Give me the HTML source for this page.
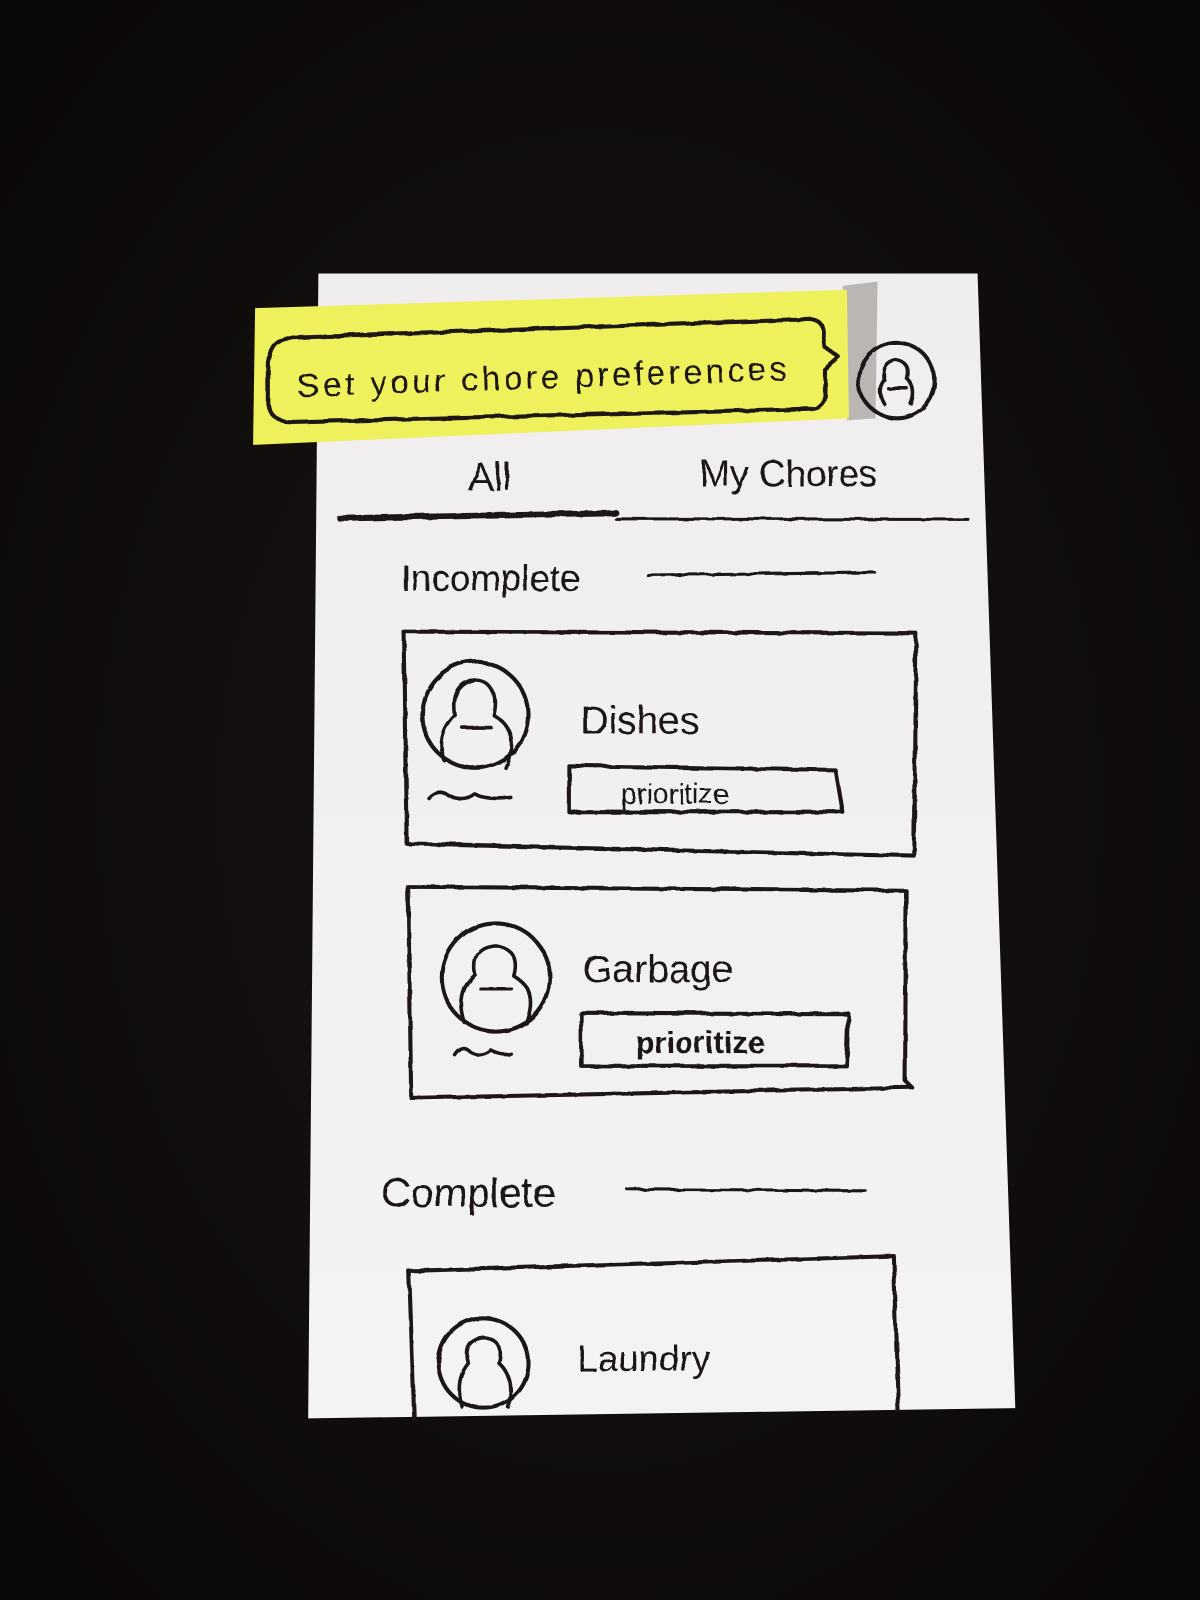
<!DOCTYPE html>
<html><head><meta charset="utf-8"><style>
html,body{margin:0;padding:0;width:1200px;height:1600px;overflow:hidden;background:#110d0d}
svg{display:block}
text{font-family:"Liberation Sans",sans-serif;fill:#1a1616}
</style></head><body>
<svg width="1200" height="1600" viewBox="0 0 1176 1568" preserveAspectRatio="none">
<defs>
<radialGradient id="bg" cx="0.5" cy="0.5" r="0.7"><stop offset="0" stop-color="#1a1515"/><stop offset="1" stop-color="#0a0707"/></radialGradient>
<linearGradient id="paper" x1="0" y1="0" x2="0" y2="1"><stop offset="0" stop-color="#efeded"/><stop offset="1" stop-color="#f4f3f3"/></linearGradient>
<filter id="rough"><feTurbulence baseFrequency="0.03" numOctaves="2" seed="3"/><feDisplacementMap in="SourceGraphic" scale="3"/></filter>
</defs>
<rect width="1176" height="1568" fill="url(#bg)"/>
<polygon points="312,268 958,268 995,1380 302,1390" fill="url(#paper)"/>
<polygon points="826,280 860,276 858,410 830,412" fill="#b9b6b4"/>
<polygon points="250,302 830,284 832,410 248,436" fill="#eef05c"/>
<g fill="none" stroke="#1a1616" stroke-linecap="round" stroke-linejoin="round" filter="url(#rough)">
<path d="M275,333 Q265,335 262,355 L262,395 Q264,412 285,413 L795,400 Q808,398 808,385 L808,362 L822,350 L808,340 L806,322 Q804,312 790,312 L285,330 Z" stroke-width="4"/>
<circle cx="878" cy="372" r="37" stroke-width="4"/>
<path d="M866,372 Q862,355 877,352 Q892,354 888,370 Q898,380 892,395 M866,372 Q858,382 866,395 M870,380 L888,380" stroke-width="3.5"/>
<path d="M332,507 L603,502" stroke-width="6"/>
<path d="M603,508 L948,508" stroke-width="3"/>
<path d="M634,563 L856,560" stroke-width="3"/>
<path d="M395,618 L897,620 L895,838 L398,826 Z" stroke-width="4"/>
<circle cx="465" cy="700" r="52" stroke-width="4"/>
<path d="M445,700 Q440,670 465,665 Q490,670 483,700 Q510,715 495,752 M445,700 Q425,720 435,745 M452,712 L480,712" stroke-width="3.5"/>
<path d="M420,782 Q430,772 440,780 Q455,786 465,778 Q478,784 500,781" stroke-width="3.5"/>
<path d="M557,750 L818,754 L825,795 L557,795 Z" stroke-width="4"/>
<path d="M399,868 L887,872 L886,1058 L893,1065 L402,1075 Z" stroke-width="4"/>
<circle cx="485" cy="957" r="53" stroke-width="4"/>
<path d="M465,955 Q460,928 485,926 Q510,930 503,956 Q528,970 515,1002 M465,955 Q445,972 455,1002 M470,968 L500,968" stroke-width="3.5"/>
<path d="M445,1033 Q452,1022 460,1030 Q470,1036 480,1028 Q490,1034 500,1032" stroke-width="3.5"/>
<path d="M569,992 L831,993 L829,1044 L569,1044 Z" stroke-width="4"/>
<path d="M614,1165 L847,1166" stroke-width="3"/>
<path d="M405,1390 L400,1245 L875,1230 L880,1382" stroke-width="4"/>
<circle cx="473" cy="1335" r="44" stroke-width="4"/>
<path d="M458,1335 Q452,1312 473,1310 Q494,1312 488,1335 Q505,1350 497,1378 M458,1335 Q444,1352 452,1378" stroke-width="3.5"/>
</g>
<g filter="url(#rough)">
<text x="290" y="380" font-size="33" textLength="480" transform="rotate(-2 530 370)">Set your chore preferences</text>
<text x="458" y="480" font-size="38">All</text>
<text x="685" y="476" font-size="36">My Chores</text>
<text x="392" y="578" font-size="36">Incomplete</text>
<text x="568" y="718" font-size="38">Dishes</text>
<text x="608" y="787" font-size="28">prioritize</text>
<text x="570" y="962" font-size="38">Garbage</text>
<text x="622" y="1031" font-size="30" font-weight="bold">prioritize</text>
<text x="373" y="1182" font-size="40">Complete</text>
<text x="565" y="1343" font-size="36">Laundry</text>
</g>
</svg>
</body></html>
